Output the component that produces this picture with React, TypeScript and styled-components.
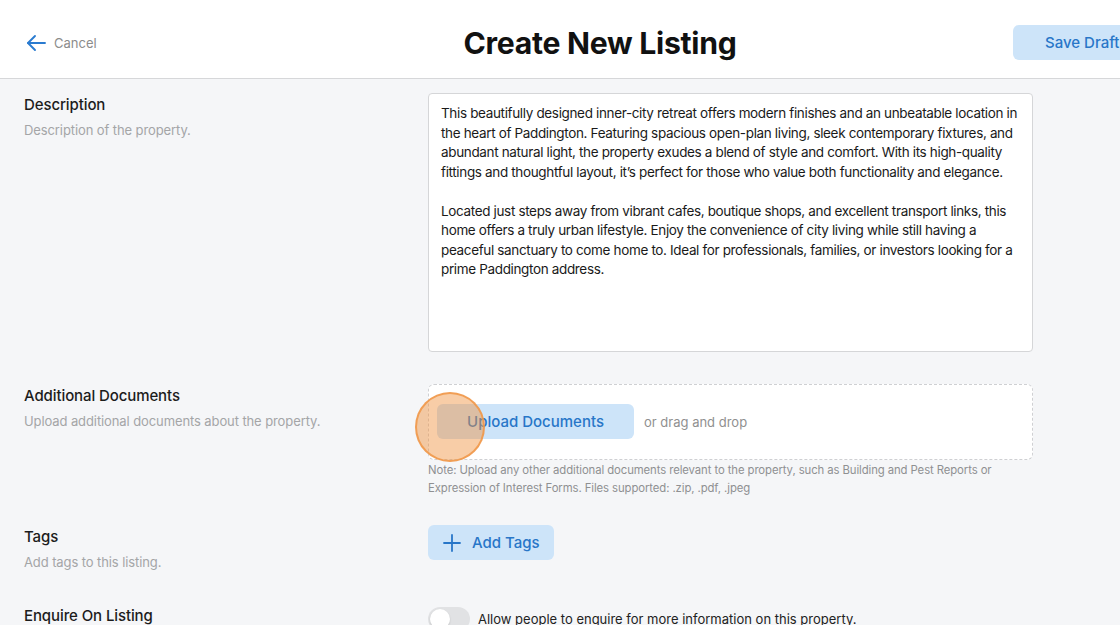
import React from "react";
import styled, { createGlobalStyle } from "styled-components";

const Global = createGlobalStyle`
  html, body { margin: 0; padding: 0; }
  body {
    background: #f5f6f8;
    font-family: Inter, "Noto Sans", "Liberation Sans", sans-serif;
    overflow: hidden;
    -webkit-font-smoothing: antialiased;
  }
  * { box-sizing: border-box; }
`;

const Page = styled.div`
  width: 1120px;
  height: 625px;
  overflow: hidden;
  background: #f5f6f8;
  position: relative;
`;

const Header = styled.header`
  width: 1200px;
  height: 79px;
  background: #ffffff;
  border-bottom: 1px solid #d6d7d9;
  display: grid;
  grid-template-columns: 1fr auto 1fr;
  align-items: center;
  padding: 7px 26px 0;
`;

const BackLink = styled.a`
  display: flex;
  align-items: center;
  gap: 8px;
  color: #8c8c8c;
  font-size: 13px;
  cursor: pointer;
  justify-self: start;
`;

const Title = styled.h1`
  margin: 0;
  font-size: 30.2px;
  font-weight: 700;
  color: #111;
  letter-spacing: -0.3px;
  white-space: nowrap;
`;

const SoftButton = styled.button`
  display: inline-flex;
  align-items: center;
  justify-content: center;
  gap: 11px;
  height: 35px;
  border: none;
  border-radius: 6px;
  background: #cde4f9;
  color: #2876c8;
  font-family: inherit;
  font-size: 15px;
  font-weight: 500;
  cursor: pointer;
  white-space: nowrap;
`;

const SaveButton = styled(SoftButton)`
  justify-self: end;
  width: 161px;
  justify-content: flex-start;
  padding: 0 0 0 32px;
`;

const Content = styled.main`
  padding-top: 14px;
  display: flex;
  flex-direction: column;
`;

const Row = styled.section<{ $after: number }>`
  display: grid;
  grid-template-columns: 404px 605px;
  padding-left: 24px;
  margin-bottom: ${(p) => p.$after}px;
`;

const LabelCol = styled.div`
  padding-top: 2px;
`;

const Label = styled.div`
  font-size: 15px;
  font-weight: 500;
  color: #1c1c1c;
  line-height: 20px;
  letter-spacing: -0.1px;
`;

const Sub = styled.div`
  margin-top: 5px;
  font-size: 13px;
  color: #a4a5a7;
  line-height: 20px;
  letter-spacing: -0.1px;
`;

const TextBox = styled.div`
  height: 259px;
  background: #fff;
  border: 1px solid #d5d6d8;
  border-radius: 4px;
  padding: 10px 11px 10px 12px;
  font-size: 13.5px;
  line-height: 19.5px;
  color: #1a1a1a;
  letter-spacing: -0.35px;
  p { margin: 0 0 19.5px; }
`;

const DropZone = styled.div`
  background: #fff;
  border: 1px dashed #cfd0d3;
  border-radius: 6px;
  padding: 19px 8px 20px;
  display: flex;
  align-items: center;
  gap: 10px;
`;

const UploadButton = styled(SoftButton)`
  width: 197px;
`;

const DropHint = styled.span`
  font-size: 13px;
  color: #909090;
`;

const Note = styled.p`
  margin: 1px 0 0;
  font-size: 11.35px;
  line-height: 18px;
  color: #8f9092;
  letter-spacing: -0.1px;
`;

const TagsButton = styled(SoftButton)`
  padding: 0 14px 0 15px;
`;

const FieldCol = styled.div`
  display: flex;
  flex-direction: column;
  align-items: flex-start;
`;

const FullField = styled.div``;

const ToggleLine = styled.label`
  display: flex;
  align-items: flex-start;
  gap: 8px;
  font-size: 13px;
  color: #222;
  padding-top: 3px;
  line-height: 24px;
`;

const Track = styled.span`
  width: 42px;
  height: 24px;
  border-radius: 12px;
  background: #e1e2e4;
  position: relative;
  flex-shrink: 0;
`;

const Knob = styled.span`
  position: absolute;
  left: 2px;
  top: 2px;
  width: 20px;
  height: 20px;
  border-radius: 50%;
  background: #fff;
  box-shadow: 0 1px 2px rgba(0, 0, 0, 0.15);
`;

const ClickMark = styled.div`
  position: absolute;
  left: 415px;
  top: 392px;
  width: 70px;
  height: 70px;
  border-radius: 50%;
  background: rgba(240, 145, 60, 0.45);
  border: 2px solid rgba(240, 150, 70, 0.85);
  pointer-events: none;
`;

const ArrowIcon = () => (
  <svg width="20" height="18" viewBox="0 0 20 18" fill="none" stroke="#2a7bd0" strokeWidth="1.9" strokeLinecap="round" strokeLinejoin="round">
    <path d="M19 9H2" />
    <path d="M9 2L2 9l7 7" />
  </svg>
);

const PlusIcon = () => (
  <svg width="18" height="18" viewBox="0 0 18 18" fill="none" stroke="#2876c8" strokeWidth="1.8" strokeLinecap="round">
    <path d="M9 1v16M1 9h16" />
  </svg>
);

export default function App() {
  return (
    <>
      <Global />
      <Page>
        <Header>
          <BackLink>
            <ArrowIcon />
            Cancel
          </BackLink>
          <Title>Create New Listing</Title>
          <SaveButton>Save Draft</SaveButton>
        </Header>
        <Content>
          <Row $after={32}>
            <LabelCol>
              <Label>Description</Label>
              <Sub>Description of the property.</Sub>
            </LabelCol>
            <FullField>
              <TextBox>
                <p>
                  This beautifully designed inner-city retreat offers modern finishes and an unbeatable location in the heart of Paddington. Featuring spacious open-plan living, sleek contemporary fixtures, and abundant natural light, the property exudes a blend of style and comfort. With its high-quality fittings and thoughtful layout, it’s perfect for those who value both functionality and elegance.
                </p>
                <p>
                  Located just steps away from vibrant cafes, boutique shops, and excellent transport links, this home offers a truly urban lifestyle. Enjoy the convenience of city living while still having a peaceful sanctuary to come home to. Ideal for professionals, families, or investors looking for a prime Paddington address.
                </p>
              </TextBox>
            </FullField>
          </Row>
          <Row $after={28}>
            <LabelCol>
              <Label>Additional Documents</Label>
              <Sub>Upload additional documents about the property.</Sub>
            </LabelCol>
            <FullField>
              <DropZone>
                <UploadButton>Upload Documents</UploadButton>
                <DropHint>or drag and drop</DropHint>
              </DropZone>
              <Note>
                Note: Upload any other additional documents relevant to the property, such as Building and Pest Reports or Expression of Interest Forms. Files supported: .zip, .pdf, .jpeg
              </Note>
            </FullField>
          </Row>
          <Row $after={32}>
            <LabelCol>
              <Label>Tags</Label>
              <Sub>Add tags to this listing.</Sub>
            </LabelCol>
            <FieldCol>
              <TagsButton>
                <PlusIcon />
                Add Tags
              </TagsButton>
            </FieldCol>
          </Row>
          <Row $after={0}>
            <LabelCol>
              <Label>Enquire On Listing</Label>
              <Sub>Allow enquiries on this listing.</Sub>
            </LabelCol>
            <FieldCol>
              <ToggleLine>
                <Track>
                  <Knob />
                </Track>
                Allow people to enquire for more information on this property.
              </ToggleLine>
            </FieldCol>
          </Row>
        </Content>
        <ClickMark />
      </Page>
    </>
  );
}
